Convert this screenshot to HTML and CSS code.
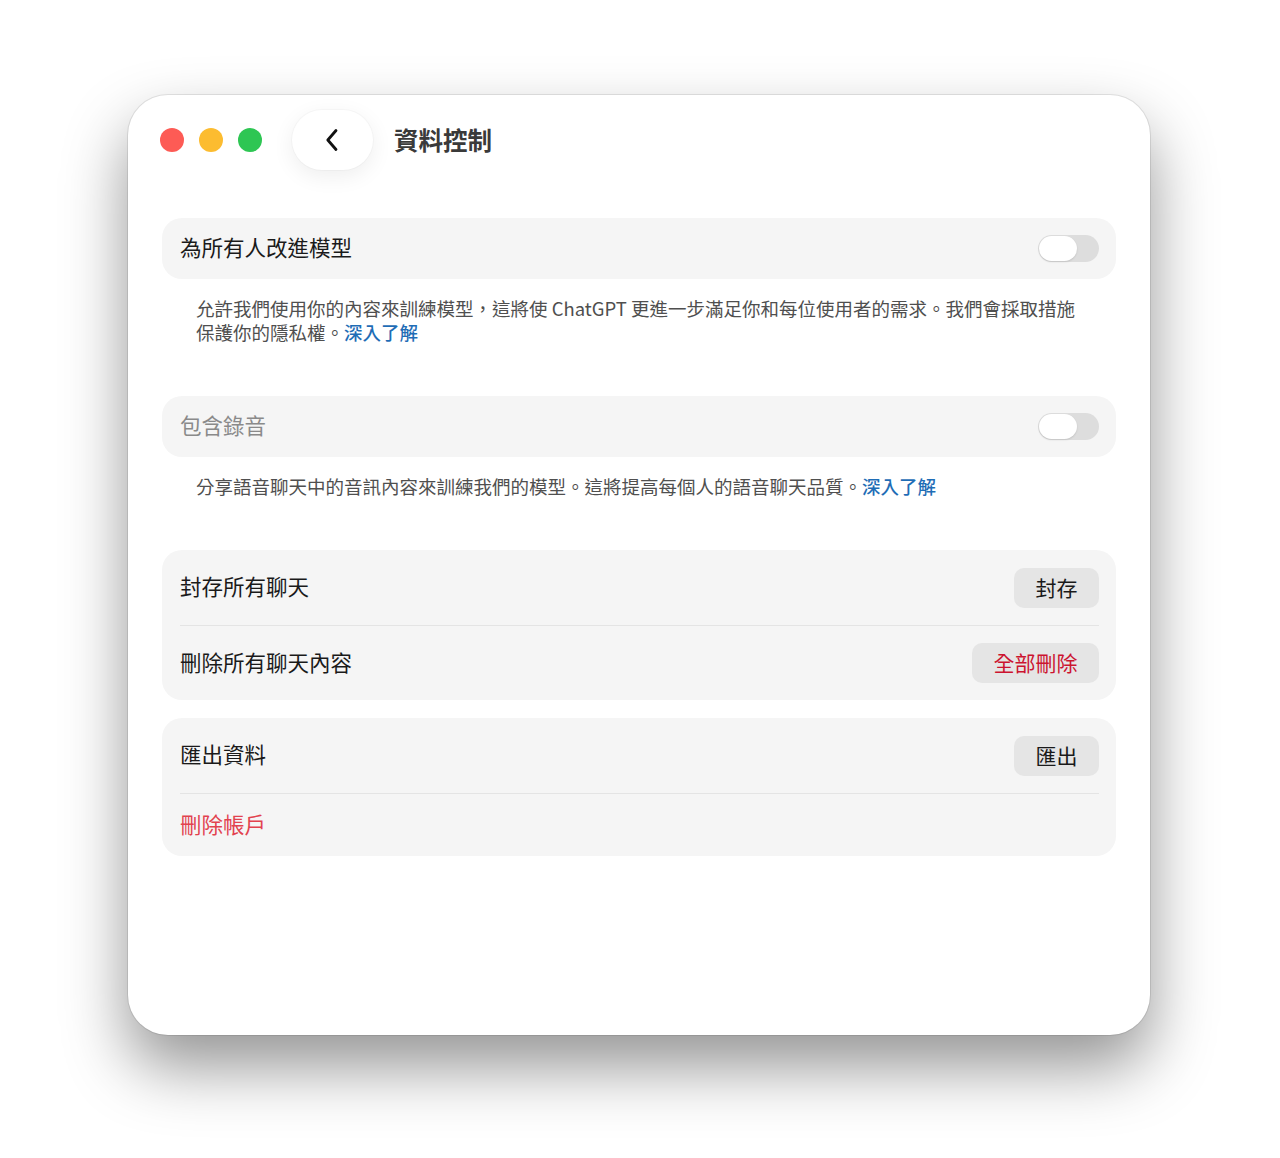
FILE: index.html
```html
<!DOCTYPE html>
<html lang="zh-Hant">
<head>
<meta charset="utf-8">
<title>資料控制</title>
<link rel="stylesheet" href="styles.css">
</head>
<body>
<div class="window">
  <div class="titlebar">
    <div class="lights">
      <span class="light red"></span>
      <span class="light yellow"></span>
      <span class="light green"></span>
    </div>
    <button class="back" aria-label="返回">
      <svg width="16" height="24" viewBox="0 0 16 24"><path d="M12 2.5 L3.8 12 L12 21.5" fill="none" stroke="#111" stroke-width="2.8" stroke-linecap="round" stroke-linejoin="round"/></svg>
    </button>
    <h1 class="title">資料控制</h1>
  </div>

  <div class="content">
    <div class="card toggle-card">
      <span class="label">為所有人改進模型</span>
      <span class="toggle"><span class="knob"></span></span>
    </div>
    <p class="desc">允許我們使用你的內容來訓練模型，這將使 ChatGPT 更進一步滿足你和每位使用者的需求。我們會採取措施保護你的隱私權。<a class="link">深入了解</a></p>

    <div class="card toggle-card section-gap">
      <span class="label muted">包含錄音</span>
      <span class="toggle"><span class="knob"></span></span>
    </div>
    <p class="desc">分享語音聊天中的音訊內容來訓練我們的模型。這將提高每個人的語音聊天品質。<a class="link">深入了解</a></p>

    <div class="card group section-gap">
      <div class="row">
        <span class="label">封存所有聊天</span>
        <span class="btn">封存</span>
      </div>
      <div class="row">
        <span class="label">刪除所有聊天內容</span>
        <span class="btn danger">全部刪除</span>
      </div>
    </div>

    <div class="card group group-gap">
      <div class="row">
        <span class="label">匯出資料</span>
        <span class="btn">匯出</span>
      </div>
      <div class="row short">
        <span class="label danger-text">刪除帳戶</span>
      </div>
    </div>
  </div>
</div>
</body>
</html>
```

FILE: styles.css
```css
html, body {
  margin: 0;
  padding: 0;
  background: #ffffff;
}

html {
  min-height: 1158px;
}

body {
  font-family: "Noto Sans CJK TC", "Noto Sans", sans-serif;
  color: #1d1d1d;
  padding-top: 95px;
  padding-left: 128px;
  min-height: 1158px;
  box-sizing: border-box;
}

.window {
  width: 1022px;
  height: 940px;
  box-sizing: border-box;
  background: #ffffff;
  border-radius: 40px;
  box-shadow: 0 32px 64px rgba(0, 0, 0, 0.42), 0 0 0 1px rgba(0, 0, 0, 0.09);
}

.titlebar {
  display: flex;
  align-items: center;
  height: 60px;
  padding-top: 15px;
  padding-left: 32px;
}

.lights {
  display: flex;
  gap: 15px;
}

.light {
  width: 24px;
  height: 24px;
  border-radius: 50%;
  display: block;
}
.light.red { background: #fd5b55; }
.light.yellow { background: #fcbc30; }
.light.green { background: #2ec653; }

.back {
  margin-left: 30px;
  width: 81px;
  height: 60px;
  border: none;
  border-radius: 30px;
  background: #ffffff;
  box-shadow: 0 6px 22px rgba(0, 0, 0, 0.07), 0 0 0 1px rgba(0, 0, 0, 0.025);
  display: flex;
  align-items: center;
  justify-content: center;
  padding: 0 2px 0 0;
}

.title {
  margin: 0 0 0 21px;
  font-size: 24.5px;
  font-weight: 700;
  color: #3a3a3a;
  line-height: 30px;
}

.content {
  padding: 48px 34px 0 34px;
}

.card {
  background: #f5f5f5;
  border-radius: 20px;
}

.toggle-card {
  height: 61px;
  display: flex;
  align-items: center;
  justify-content: space-between;
  padding: 0 17px 0 18px;
}

.label {
  font-size: 21.5px;
  line-height: 28px;
  font-weight: 400;
  color: #1a1a1a;
  margin-top: -3px;
}

.label.muted {
  color: #8a8a8a;
}

.label.danger-text {
  color: #e2424f;
}

.toggle {
  width: 61px;
  height: 27px;
  border-radius: 14px;
  background: #dddddd;
  display: flex;
  align-items: center;
  padding-left: 1px;
  box-sizing: border-box;
}

.knob {
  width: 38px;
  height: 25px;
  border-radius: 13px;
  background: #ffffff;
  box-shadow: 0 1px 2px rgba(0, 0, 0, 0.12);
}

.desc {
  margin: 17px 0 0 0;
  padding: 0 30px 0 34px;
  font-size: 18.5px;
  line-height: 24px;
  color: #4f4f4f;
}

.link {
  color: #1f6db6;
  font-weight: 500;
}

.section-gap {
  margin-top: 52px;
}

.group-gap {
  margin-top: 18px;
}

.group {
  padding: 0 17px 0 18px;
}

.row {
  height: 75px;
  display: flex;
  align-items: center;
  justify-content: space-between;
  box-sizing: border-box;
}

.row + .row {
  border-top: 1px solid #e4e4e4;
}

.row.short {
  height: 63px;
}

.btn {
  height: 40px;
  padding: 0 21.5px;
  border-radius: 10px;
  background: #e5e5e5;
  font-size: 21px;
  font-weight: 400;
  line-height: 38px;
  color: #1a1a1a;
}

.btn.danger {
  color: #cc1430;
}
```
